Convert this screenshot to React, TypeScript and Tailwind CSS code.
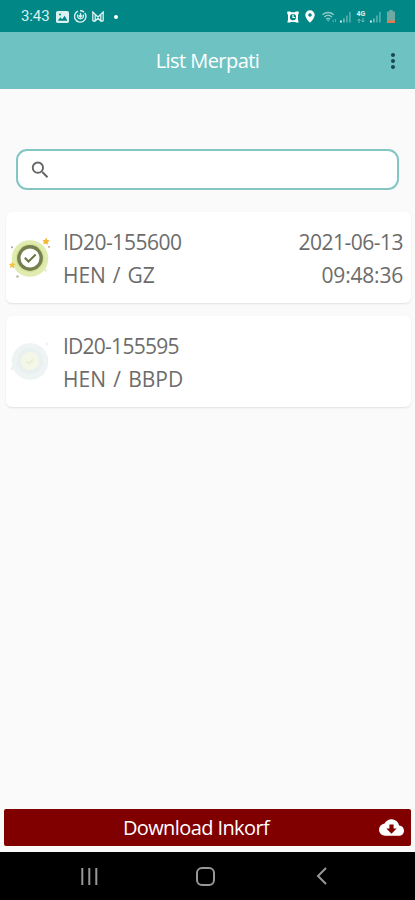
import { MdCloudDownload, MdMoreVert, MdSearch } from 'react-icons/md';

type Pigeon = {
  ring: string;
  info: string;
  date?: string;
  time?: string;
  ringClass: string;
  infoClass: string;
};

const pigeons: Pigeon[] = [
  {
    ring: 'ID20-155600',
    info: 'HEN / GZ',
    date: '2021-06-13',
    time: '09:48:36',
    ringClass: 'tracking-[-0.5px]',
    infoClass: 'tracking-[-0.1px] [word-spacing:1.8px]',
  },
  {
    ring: 'ID20-155595',
    info: 'HEN / BBPD',
    ringClass: 'tracking-[-0.75px]',
    infoClass: 'tracking-[0px] [word-spacing:1.8px]',
  },
];

function SignalIcon() {
  return (
    <svg className="h-3 w-3" viewBox="0 0 12 12" fill="#fff">
      <rect x="0" y="9.5" width="1.8" height="2" opacity="0.9" />
      <rect x="3" y="7.5" width="1.8" height="4" opacity="0.4" />
      <rect x="6" y="4.5" width="1.8" height="7" opacity="0.3" />
      <rect x="9" y="1" width="1.8" height="10.5" opacity="0.3" />
    </svg>
  );
}

function StatusBar() {
  return (
    <div className="flex h-8 shrink-0 items-center bg-[#018786] pl-[21px] pr-[20px] pt-px text-[#d9f1f0]">
      <span className="w-[29px] whitespace-nowrap font-[Roboto] text-[15px] leading-none tracking-[-0.1px]">3:43</span>
      <svg className="ml-[6px] h-3 w-[13px]" viewBox="0 0 13 12">
        <rect x="0" y="0" width="13" height="12" rx="1.8" fill="#d9f1f0" />
        <path d="M1.8 9.8 4.3 6.3l1.8 2 2.6-3.5 2.7 5z" fill="#018786" />
        <circle cx="4" cy="3.5" r="1" fill="#018786" />
      </svg>
      <svg className="ml-[5px] h-[13px] w-[13px]" viewBox="0 0 13 13" fill="none" stroke="#d9f1f0" strokeWidth="1.4">
        <path d="M4 1.2A5.7 5.7 0 1 0 10.8 3" />
        <path d="M6 .8a5.7 5.7 0 0 1 4 1.3" />
        <path d="M3.8 4.6a3 3 0 1 0 5.4 0M6.5 3v4M5 5.5l1.5 1.7L8 5.5" />
      </svg>
      <svg className="ml-[5px] h-[11px] w-[12px]" viewBox="0 0 12 11" fill="none" stroke="#d9f1f0" strokeWidth="1.3">
        <path d="M.8 10V1L6 6l5.2-5v9M3.2 3.4V10L6 7.2 8.8 10V3.4M.8 10h2.4M8.8 10h2.4" />
      </svg>
      <span className="ml-[10px] h-1 w-1 rounded-full bg-white" />

      <svg className="ml-auto h-3 w-3" viewBox="0 0 12 12">
        <path d="M.3 2.8V.5h3L4 1.3h4L8.7.5h3v2.3l-.7 1v5l.7 2.7H9.2L8 11H4l-1.2.5H.3L1 8.8v-5z" fill="#fff" />
        <circle cx="6" cy="6.2" r="3.1" fill="#018786" />
        <path d="M6 3.6v2.9h2.2" stroke="#fff" strokeWidth="1.2" fill="none" />
      </svg>
      <svg className="ml-[6px] h-[13px] w-[10px]" viewBox="0 0 10 13">
        <path d="M5 .3a4.7 4.7 0 0 0-4.7 4.7C.3 8.3 5 12.8 5 12.8S9.7 8.3 9.7 5A4.7 4.7 0 0 0 5 .3z" fill="#fff" />
        <circle cx="5" cy="5" r="1.8" fill="#018786" />
      </svg>
      <svg className="ml-[7px] h-3 w-[15px]" viewBox="0 0 15 12" fill="none" stroke="#8ccac8" strokeWidth="1.5">
        <path d="M.5 3.8c3.3-3 8-3 11.2 0M2.3 6c2.3-2 5.4-2 7.7 0M4.2 8.2c1.2-1 2.7-1 4 0" />
        <path d="m5 9.3 1.2 1.5 1.1-1.5z" fill="#8ccac8" stroke="none" />
        <path d="M11.2 8.5v2.7M13.4 8v3" strokeWidth="1" opacity="0.6" />
      </svg>
      <div className="ml-[3px]"><SignalIcon /></div>
      <div className="ml-[4px] flex w-[10px] flex-col items-center">
        <span className="font-[Roboto] text-[7px] font-bold leading-[7px]">4G</span>
        <svg className="h-[5px] w-[8px]" viewBox="0 0 8 5" fill="none" stroke="#73bdbb">
          <path d="M2 5V1M.5 2.5 2 1l1.5 1.5M6 0v4M4.5 2.5 6 4l1.5-1.5" />
        </svg>
      </div>
      <div className="ml-[4px]"><SignalIcon /></div>
      <svg className="ml-[5px] h-[13px] w-2" viewBox="0 0 8 13">
        <path d="M2.3 0h3.4v1.5H8V13H0V1.5h2.3z" fill="#6fa9a4" />
        <path d="M0 10.5h8V13H0z" fill="#e8794b" />
      </svg>
    </div>
  );
}

function VerifiedBadge() {
  return (
    <svg className="h-[44px] w-[42px]" viewBox="0 0 42 44">
      <circle cx="21" cy="22.5" r="18.3" fill="#dfebaf" />
      <circle cx="21" cy="22" r="14.2" fill="#d3e19b" />
      <circle cx="21" cy="22" r="11.2" fill="#fff" stroke="#757f4d" strokeWidth="3.4" />
      <path d="m15.8 21.8 3.7 3.7 7.2-7" fill="none" stroke="#6c7644" strokeWidth="2" />
      <path d="m37.3 1.6 1 2.3 2.6.6-2.1 1.7v2.6l-2.1-1.4-2.6.9.8-2.6L33.3 4l2.6-.1z" fill="#f1b835" />
      <path d="m3.3 25.5 1 2.2 2.4.4-1.8 1.7.3 2.4-2-1.1-2.2 1 .4-2.4-1.2-1.8 2.3-.4z" fill="#f1c443" />
      <circle cx="3" cy="11.3" r="1.1" fill="#a5ae91" />
      <circle cx="40" cy="10.8" r=".9" fill="#b38a71" />
      <circle cx="8.5" cy="40.5" r="1.3" fill="#b6b9aa" />
      <circle cx="36.7" cy="34.5" r="1" fill="#dce3a5" />
    </svg>
  );
}

function PendingBadge() {
  return (
    <svg className="h-[44px] w-[42px]" viewBox="0 0 42 44">
      <circle cx="21" cy="21.5" r="18.3" fill="#eef3f4" />
      <circle cx="21" cy="21" r="13" fill="#e9f0f0" />
      <circle cx="21" cy="21" r="9.2" fill="#f4f7e7" />
      <path d="m17.5 21.3 2.5 2.4 4.5-4.5" fill="none" stroke="#ebeed6" strokeWidth="1.8" />
      <circle cx="38" cy="4" r="1.5" fill="#eef3f4" />
      <path d="m3.3 25 1 2 2.4.4-1.8 1.7-1.6 1.6-2.2-2z" fill="#eef3f4" />
    </svg>
  );
}

function PigeonCard({ pigeon }: { pigeon: Pigeon }) {
  return (
    <div className="flex h-[91px] items-center rounded-[6px] bg-white pl-[3px] pr-2 text-[21px] leading-[33px] text-[#6c6c6c] shadow-[0_1px_2px_rgba(0,0,0,0.1)]">
      {pigeon.date ? <VerifiedBadge /> : <PendingBadge />}
      <div className="ml-[12px] whitespace-nowrap pt-[2px]">
        <div className={pigeon.ringClass}>{pigeon.ring}</div>
        <div className={pigeon.infoClass}>{pigeon.info}</div>
      </div>
      <div className="ml-auto whitespace-nowrap pt-[2px] text-right">
        <div className="tracking-[-0.5px]">{pigeon.date}</div>
        <div className="tracking-[-0.2px]">{pigeon.time}</div>
      </div>
    </div>
  );
}

export default function App() {
  return (
    <div className="flex h-[900px] w-[415px] flex-col overflow-hidden bg-[#fafafa] font-['Open_Sans',sans-serif]">
      <StatusBar />
      <header className="flex h-[57px] shrink-0 items-center bg-[#6fc2c2]">
        <div className="w-[34px]" />
        <h1 className="flex-1 pt-px text-center text-[20px] font-medium leading-none tracking-[-0.55px] text-white">List Merpati</h1>
        <MdMoreVert className="mr-[10px] h-6 w-6 text-[#17494d]" />
      </header>

      <main className="flex flex-1 flex-col px-1">
        <label className="mx-3 mt-[60px] flex h-[41px] items-center rounded-[11px] border-2 border-[#83c6c3] bg-white pl-[11px]">
          <MdSearch className="h-6 w-6 text-[#666]" />
          <input className="w-full bg-transparent px-2 outline-none" />
        </label>

        <div className="mt-[22px] flex flex-col gap-[13px] pl-[2px]">
          {pigeons.map((pigeon) => (
            <PigeonCard key={pigeon.ring} pigeon={pigeon} />
          ))}
        </div>

        <button className="mb-[6px] mt-auto flex h-[37px] items-center rounded-[2px] bg-[#800000] pr-[7px] text-[20px] text-white">
          <span className="flex-1 pl-[9px] pt-px text-center font-medium tracking-[-0.6px]">Download Inkorf</span>
          <MdCloudDownload className="h-[25px] w-[25px]" />
        </button>
      </main>

      <nav className="flex h-12 shrink-0 items-center bg-black pl-[81px]">
        <svg className="h-[17px] w-[17px]" viewBox="0 0 17 17" stroke="#989898" strokeWidth="2">
          <path d="M1.3 0v17M8.3 0v17M15.3 0v17" />
        </svg>
        <svg className="ml-[98px] h-[19px] w-[19px]" viewBox="0 0 19 19" fill="none" stroke="#989898" strokeWidth="2">
          <rect x="1" y="1" width="17" height="17" rx="5" />
        </svg>
        <svg className="ml-[101px] h-[18px] w-[11px]" viewBox="0 0 11 18" fill="none" stroke="#989898" strokeWidth="2">
          <path d="M10 1 2 9l8 8" />
        </svg>
      </nav>
    </div>
  );
}
